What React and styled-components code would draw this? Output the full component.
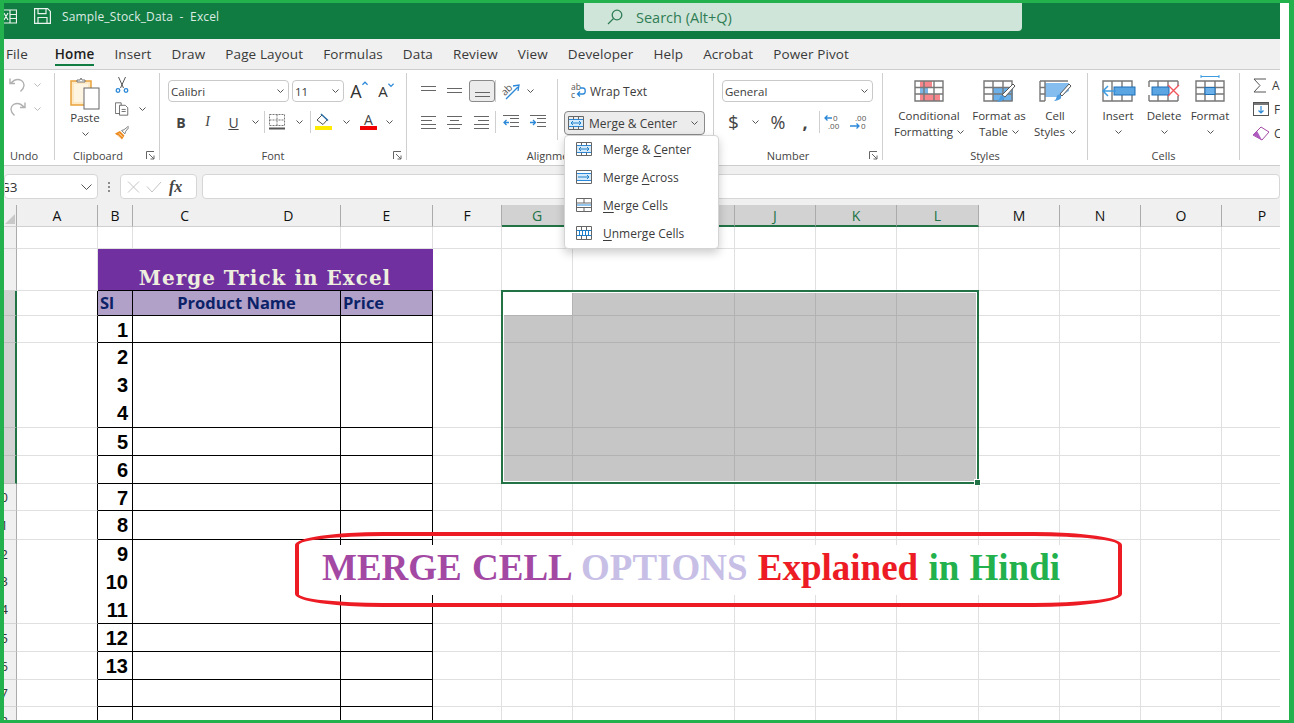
import styled, { createGlobalStyle } from "styled-components"

const GlobalStyle = createGlobalStyle`
    html, body {
        margin: 0;
        padding: 0;
        background: #fff;
    }
    * {
        box-sizing: border-box;
    }
`

const uiFont = `"Open Sans", "Noto Sans", sans-serif`

const Frame = styled.div`
    position: relative;
    width: 1294px;
    height: 723px;
    overflow: hidden;
    background: #fff;
    font-family: ${uiFont};
    color: #333;
    border-style: solid;
    border-color: #22b14c;
    border-width: 3px 5px 3px 4px;
    padding-right: 9px;
    display: flex;
    flex-direction: column;
`

const TitleBar = styled.div`
    height: 36px;
    flex: none;
    background: #107c41;
    display: flex;
    align-items: flex-start;
`

const TitleLeft = styled.div`
    width: 580px;
    height: 100%;
    display: flex;
    align-items: center;
    padding-bottom: 10px;
    color: #dcebe3;
    font-size: 12px;
    letter-spacing: 0.15px;
    white-space: pre;
    svg {
        flex: none;
    }
`

const SaveWrap = styled.span`
    margin: 0 11px 0 17px;
    display: flex;
`

const Search = styled.div`
    width: 438px;
    height: 28px;
    background: #cfe5d9;
    border-radius: 0 0 4px 4px;
    padding-left: 23px;
    display: flex;
    align-items: center;
    gap: 13px;
    color: #2f7d55;
    font-size: 14.5px;
`

const TabBar = styled.div`
    height: 31px;
    flex: none;
    background: #f0f0f0;
    border-bottom: 1px solid #cdcdcd;
    display: flex;
    gap: 20px;
    padding-left: 2px;
`

const Tab = styled.div`
    height: 27px;
    padding-top: 5px;
    font-size: 13.5px;
    letter-spacing: 0.12px;
    line-height: 20px;
    white-space: nowrap;
    margin-right: ${(p) => p.$mr || 0}px;
    color: ${(p) => (p.$active ? "#1d1d1d" : "#3a3a3a")};
    font-weight: ${(p) => (p.$active ? 600 : 400)};
    border-bottom: 2px solid ${(p) => (p.$active ? "#107c41" : "transparent")};
`

const Ribbon = styled.div`
    height: 96px;
    flex: none;
    background: #fff;
    border-bottom: 1px solid #cdcdcd;
    display: flex;
    position: relative;
    z-index: 3;
`

const Group = styled.div`
    width: ${(p) => p.$w}px;
    height: 87px;
    margin-top: 3px;
    flex: none;
    display: flex;
    flex-direction: column;
    border-right: ${(p) => (p.$last ? "none" : "1px solid #cfcfcf")};
    overflow: ${(p) => (p.$last ? "hidden" : "visible")};
`

const GroupBody = styled.div`
    height: 73px;
    flex: none;
    display: flex;
    align-items: flex-start;
    padding-left: ${(p) => p.$pl || 0}px;
    padding-top: ${(p) => p.$pt || 0}px;
`

const LabelRow = styled.div`
    height: 18px;
    flex: none;
    display: flex;
    align-items: center;
`

const GroupLabel = styled.div`
    flex: 1;
    text-align: center;
    font-size: 11px;
    color: #444;
`

const LauncherSlot = styled.div`
    width: ${(p) => p.$w}px;
    display: flex;
    justify-content: flex-end;
    padding-right: 4px;
`

const Stack = styled.div`
    display: flex;
    flex-direction: column;
    gap: ${(p) => p.$gap || 0}px;
    width: ${(p) => (p.$w ? `${p.$w}px` : "auto")};
    padding-top: ${(p) => p.$pt || 0}px;
    flex: none;
`

const Row = styled.div`
    height: ${(p) => p.$h || 22}px;
    display: flex;
    align-items: center;
    padding-left: ${(p) => p.$pl || 0}px;
    gap: ${(p) => p.$gap || 0}px;
`

const Slot = styled.span`
    width: ${(p) => p.$w}px;
    flex: none;
    display: flex;
    align-items: center;
    justify-content: center;
    font-family: ${(p) => p.$font || uiFont};
    font-size: ${(p) => p.$size || 13}px;
    font-weight: ${(p) => p.$weight || 400};
    font-style: ${(p) => p.$italic || "normal"};
    text-decoration: ${(p) => p.$deco || "none"};
    color: ${(p) => p.$color || "#444"};
`

const RowRule = styled.span`
    width: 1px;
    height: 22px;
    flex: none;
    background: #cfcfcf;
`

const Dropdown = styled.div`
    width: ${(p) => p.$w}px;
    height: 22px;
    flex: none;
    background: #fff;
    border: 1px solid #c9c9c9;
    border-radius: 4px;
    display: flex;
    align-items: center;
    justify-content: space-between;
    padding: 0 4px 0 2px;
    font-size: 11.5px;
    color: #3c3c3c;
`

const ActiveAlign = styled.span`
    width: 26px;
    height: 22px;
    flex: none;
    margin-left: 1px;
    background: #ececec;
    border: 1px solid #8a8a8a;
    border-radius: 3px;
    display: flex;
    align-items: center;
    justify-content: center;
`

const ColumnRule = styled.div`
    width: 1px;
    height: 61px;
    margin-top: 6px;
    flex: none;
    background: #cfcfcf;
`

const WrapRow = styled.div`
    height: 22px;
    padding-left: 13px;
    display: flex;
    align-items: center;
    gap: 4px;
    font-size: 12px;
    color: #3c3c3c;
`

const MergeWrap = styled.div`
    position: relative;
    margin: 9px 0 0 6px;
`

const MergeButton = styled.div`
    width: 141px;
    height: 24px;
    background: #ececec;
    border: 1px solid #8a8a8a;
    border-radius: 4px;
    display: flex;
    align-items: center;
    padding: 0 6px 0 3px;
    gap: 5px;
    font-size: 12px;
    color: #3c3c3c;
    span {
        flex: 1;
        white-space: nowrap;
    }
`

const Menu = styled.div`
    position: absolute;
    top: 100%;
    left: 0;
    width: 155px;
    height: 114px;
    background: #fff;
    border: 1px solid #d4d4d4;
    border-radius: 4px;
    box-shadow: 0 4px 10px rgba(0, 0, 0, 0.2);
`

const MenuItem = styled.div`
    height: 28px;
    margin-top: ${(p) => (p.$first ? -1 : 0)}px;
    display: flex;
    align-items: center;
    padding-left: 11px;
    gap: 11px;
    font-size: 12px;
    color: #3c3c3c;
    white-space: nowrap;
    u {
        text-underline-offset: 2px;
    }
`

const BigButton = styled.div`
    width: ${(p) => p.$w}px;
    flex: none;
    display: flex;
    flex-direction: column;
    align-items: center;
    padding-top: ${(p) => p.$pt ?? 7}px;
    font-size: 11.5px;
    line-height: 16px;
    color: #3c3c3c;
    white-space: nowrap;
    svg {
        overflow: visible;
    }
`

const BigIcon = styled.div`
    height: ${(p) => p.$h || 22}px;
    margin-bottom: ${(p) => p.$mb ?? 6}px;
    display: flex;
`

const CaretLine = styled.div`
    height: 16px;
    display: flex;
    align-items: center;
    justify-content: center;
    gap: 4px;
`

const EditRow = styled.div`
    height: 24px;
    display: flex;
    align-items: center;
    gap: 5px;
    font-size: 12px;
    color: #3c3c3c;
`

const FormulaStrip = styled.div`
    height: 39px;
    flex: none;
    background: #f0f0f0;
    padding: 8px 0 6px;
    display: flex;
    align-items: stretch;
`

const FormulaBox = styled.div`
    width: ${(p) => (p.$w ? `${p.$w}px` : "auto")};
    flex: ${(p) => (p.$w ? "none" : 1)};
    margin-left: ${(p) => p.$ml || 0}px;
    background: #fff;
    border: 1px solid #d6d6d6;
    border-radius: 4px;
    display: flex;
    align-items: center;
    overflow: hidden;
    font-size: 13.5px;
    color: #333;
`

const NameText = styled.span`
    flex: 1;
    margin-left: -5px;
`

const Grip = styled.div`
    width: 2px;
    margin-left: 10px;
    align-self: center;
    height: 10px;
    background: repeating-linear-gradient(#8c8c8c 0 2px, transparent 2px 4px);
`

const FxMark = styled.span`
    margin-left: 7px;
    font-family: "Liberation Serif", serif;
    font-style: italic;
    font-size: 16px;
    font-weight: 700;
    color: #444;
`

const Sheet = styled.div`
    position: relative;
    display: grid;
    grid-template-columns: ${(p) => p.$cols};
    grid-template-rows: ${(p) => p.$rows};
    flex: none;
    width: 100%;
    overflow: hidden;
`

const ColHead = styled.div`
    background: ${(p) => (p.$sel ? "#d2d2d2" : "#f0f0f0")};
    color: ${(p) => (p.$sel ? "#217346" : "#111")};
    border-right: 1px solid #ababab;
    border-bottom: ${(p) => (p.$sel ? "2px solid #217346" : "1px solid #d0d0d0")};
    display: flex;
    align-items: center;
    font-size: 14px;
    overflow: hidden;
    span {
        flex: 1;
        text-align: center;
    }
`

const Corner = styled.div`
    background: #f0f0f0;
    border-right: 1px solid #ababab;
    border-bottom: 1px solid #d0d0d0;
    display: flex;
    align-items: flex-end;
    justify-content: flex-end;
    padding: 0 1px 2px 0;
`

const RowHead = styled.div`
    background: ${(p) => (p.$sel ? "#d2d2d2" : "#f0f0f0")};
    border-right: ${(p) => (p.$sel ? "2px solid #217346" : "1px solid #ababab")};
    border-bottom: 1px solid ${(p) => (p.$sel ? "#bdbdbd" : "#d4d4d4")};
    display: flex;
    flex-direction: column;
    justify-content: space-around;
    overflow: hidden;
    font-size: 13px;
    color: #333;
    span {
        display: flex;
        justify-content: flex-end;
        padding-right: 8px;
    }
`

const Cell = styled.div`
    grid-column: ${(p) => p.$span || "auto"};
    background: ${(p) => p.$bg || "#fff"};
    border-right: 1px solid ${(p) => p.$right || "#e0e0e0"};
    border-bottom: 1px solid ${(p) => p.$bottom || "#e0e0e0"};
    display: flex;
    min-width: 0;
`

const TitleText = styled.div`
    width: 100%;
    align-self: flex-end;
    text-align: center;
    font-family: "DejaVu Serif", serif;
    font-weight: 700;
    font-size: 20px;
    letter-spacing: 1px;
    line-height: 24px;
    color: #eeeede;
    white-space: nowrap;
`

const HeadLabel = styled.div`
    width: 100%;
    align-self: center;
    padding: 0 2px;
    text-align: ${(p) => p.$align};
    font-family: "Open Sans", sans-serif;
    font-weight: 700;
    font-size: 16.5px;
    line-height: 22px;
    color: #0c2268;
`

const Numbers = styled.div`
    width: 100%;
    display: flex;
    flex-direction: column;
    justify-content: space-around;
    text-align: right;
    padding-right: 4px;
    font-family: "Liberation Sans", sans-serif;
    font-weight: 700;
    font-size: 20px;
    line-height: 28px;
    color: #000;
`

const SelectionBox = styled.div`
    position: absolute;
    inset: -1px 0 0 -1px;
    grid-column: 7 / 12;
    grid-row: 4 / 9;
    border: 2px solid #217346;
    box-shadow: inset 0 0 0 1px #fff;
    pointer-events: none;
    &::after {
        content: "";
        position: absolute;
        right: -4px;
        bottom: -4px;
        width: 5px;
        height: 5px;
        background: #217346;
        border: 1px solid #fff;
    }
`

const Callout = styled.div`
    position: absolute;
    left: 291px;
    top: 529px;
    width: 827px;
    height: 75px;
    border: 4px solid #ed1c24;
    border-radius: 88px / 13px;
    display: flex;
    align-items: center;
`

const CalloutBand = styled.div`
    width: 100%;
    height: 50px;
    background: #fff;
    padding-left: 23px;
    font-family: "Liberation Serif", serif;
    font-weight: 700;
    font-size: 37px;
    word-spacing: 1px;
    line-height: 46px;
    white-space: pre;
`

const Tone = styled.span`
    color: ${(p) => p.$c};
`

/* icons */

const Chev = ({ c = "#555" }) => (
    <svg width="7" height="4" viewBox="0 0 7 4">
        <path d="M.5.5l3 3 3-3" fill="none" stroke={c} />
    </svg>
)

const Launcher = () => (
    <svg width="9" height="9" viewBox="0 0 9 9" fill="none" stroke="#666">
        <path d="M.5 8V.5H8M3 3l5 5M8 4.5V8H4.5" />
    </svg>
)

const Lines = ({ kind }) => {
    const rows = {
        top: [[0, 15, 3], [0, 15, 7]],
        middle: [[0, 15, 5], [0, 15, 9]],
        bottom: [[0, 15, 9], [0, 15, 13]],
        left: [[0, 15, 2], [0, 11, 6], [0, 15, 10], [0, 15, 14]],
        center: [[0, 15, 2], [3, 12, 6], [0, 15, 10], [2, 13, 14]],
        right: [[0, 15, 2], [4, 15, 6], [0, 15, 10], [0, 15, 14]],
    }[kind]
    return (
        <svg width="15" height="16" viewBox="0 0 15 16" stroke="#666">
            {rows.map(([a, b, y]) => (
                <path key={y} d={`M${a} ${y + 0.5}H${b}`} />
            ))}
        </svg>
    )
}

const Indent = ({ flip }) => (
    <svg width="16" height="14" viewBox="0 0 16 14" fill="none">
        <path d="M7 3.5h9M7 7.5h9M7 11.5h9M0 .5h16" stroke="#666" />
        <path d={flip ? "M0 7.5h5M3 5l2.500 2.500L3 10" : "M6 7.5H1M3.500 5L1 7.500 3.500 10"} stroke="#2b88d8" strokeWidth="1.3" />
    </svg>
)

const ExcelGlyph = () => (
    <svg width="13" height="15" viewBox="0 0 13 15" fill="none" stroke="#eaf3ee" strokeWidth="1.2">
        <path d="M0 1h12.500v13H0M6 1v13M6 5.500h6.500M6 9.500h6.500M0 4l4 7M4 4l-4 7" />
    </svg>
)

const SaveGlyph = () => (
    <svg width="17" height="16" viewBox="0 0 17 16" fill="none" stroke="#eaf3ee" strokeWidth="1.2">
        <path d="M.6.6h13l2.800 2.800v12H.6zM4 .6v5h8v-5M4 15.400V9.500h9v5.900" />
    </svg>
)

const SearchGlyph = () => (
    <svg width="16" height="16" viewBox="0 0 16 16" fill="none" stroke="#2f7d55" strokeWidth="1.3">
        <circle cx="10" cy="6" r="4.800" />
        <path d="M6.500 9.500L1 15" />
    </svg>
)

const UndoGlyph = ({ flip }) => (
    <svg width="17" height="16" viewBox="0 0 17 16" fill="none" stroke="#b0b0b0" strokeWidth="1.4" style={flip ? { transform: "scaleX(-1)" } : undefined}>
        <path d="M1 1.500v5h5M1.500 6.500C5 2.500 9 1.500 12.500 3.500c3.500 2.500 3.500 7-1 11" />
    </svg>
)

const PasteGlyph = () => (
    <svg width="30" height="32" viewBox="0 0 30 32">
        <rect x="1" y="4" width="20" height="24" fill="#fde9c4" stroke="#e9a23b" strokeWidth="1.5" />
        <path d="M4 7h14v18H4z" fill="#fff" opacity=".5" />
        <path d="M7 5V3h3l1-2 1 2h3v2z" fill="#fff" stroke="#777" />
        <rect x="14" y="11" width="15" height="21" fill="#fff" stroke="#666" />
    </svg>
)

const ScissorsGlyph = () => (
    <svg width="14" height="16" viewBox="0 0 14 16" fill="none">
        <path d="M3.500 0l5 11M10.500 0l-5 11" stroke="#555" />
        <circle cx="3" cy="13.500" r="1.800" stroke="#2b88d8" strokeWidth="1.300" />
        <circle cx="11" cy="13.500" r="1.800" stroke="#2b88d8" strokeWidth="1.300" />
    </svg>
)

const CopyGlyph = () => (
    <svg width="17" height="16" viewBox="0 0 17 16" fill="#fff" stroke="#555">
        <path d="M.5.5h7l0 13h-7z" />
        <path d="M5.500 3.500h7l3 3v9h-10zM8 8.500h5M8 11h5" />
    </svg>
)

const BrushGlyph = () => (
    <svg width="17" height="16" viewBox="0 0 17 16" fill="none">
        <path d="M0 8.500l6-3 5.500 5.500-3 5z" fill="#ed8b21" />
        <path d="M3 10.500l4 4M5 8.500l4 4" stroke="#fff" />
        <path d="M8 5l3-1 5-4 1 1-4 5-1 3z" fill="#fff" stroke="#666" />
    </svg>
)

const GrowA = ({ down }) => (
    <>
        <span>A</span>
        <svg width="6" height="5" viewBox="0 0 7 5" style={{ alignSelf: "flex-start", marginTop: 2 }}>
            <path d={down ? "M.5.5l3 3 3-3" : "M.5 4l3-3 3 3"} fill="none" stroke="#2b88d8" strokeWidth="1.400" />
        </svg>
    </>
)

const BorderGlyph = () => (
    <svg width="16" height="16" viewBox="0 0 16 16" fill="none" stroke="#777">
        <path d="M.5.500h15v11H.500zM8 .500v11M.500 6h15" strokeDasharray="2 1" />
        <path d="M0 14.500h16" strokeWidth="2" stroke="#555" />
    </svg>
)

const FillGlyph = () => (
    <svg width="17" height="18" viewBox="0 0 17 18">
        <path d="M2 7l5-5 5 5-4 4.500z" fill="#fff" stroke="#555" />
        <path d="M6 1l7 6.500" stroke="#2b6ea8" strokeWidth="1.500" />
        <rect y="13" width="17" height="4" fill="#ffeb00" />
    </svg>
)

const ColorA = () => (
    <svg width="17" height="18" viewBox="0 0 17 18">
        <text x="8.500" y="12" textAnchor="middle" fontFamily="Open Sans" fontSize="14" fill="#444">A</text>
        <rect y="13" width="17" height="4" fill="#f00000" />
    </svg>
)

const OrientGlyph = () => (
    <svg width="20" height="18" viewBox="0 0 20 18">
        <text x="0" y="11" fontFamily="Open Sans" fontSize="10" fill="#555" transform="rotate(-45 6 8)">ab</text>
        <path d="M5 17L17 5M12 4l6-1-1 6" fill="none" stroke="#2b88d8" strokeWidth="1.300" />
    </svg>
)

const WrapGlyph = () => (
    <svg width="15" height="16" viewBox="0 0 15 16">
        <text x="0" y="7" fontFamily="Open Sans" fontSize="8.500" fill="#555">ab</text>
        <text x="0" y="15" fontFamily="Open Sans" fontSize="8.500" fill="#555">c</text>
        <path d="M9 5h3c3 0 3 6 0 6H6.500M9 8.500L6.500 11 9 13.500" fill="none" stroke="#2b88d8" strokeWidth="1.300" />
    </svg>
)

const DecimalGlyph = ({ more }) => (
    <svg width="18" height="18" viewBox="0 0 18 18">
        <text x={more ? 5 : 9} y="7.500" fontFamily="Open Sans" fontSize="8" fill="#555">{more ? ".00" : "0"}</text>
        <text x={more ? 11 : 4} y="16" fontFamily="Open Sans" fontSize="8" fill="#555">{more ? "0" : ".00"}</text>
        <path d={more ? "M0 13h9M6.500 10.500L9 13l-2.500 2.500" : "M8 5H1M3.500 2.500L1 5l2.500 2.500"} fill="none" stroke="#2b88d8" strokeWidth="1.300" />
    </svg>
)

const MergeGlyph = ({ kind }) => (
    <svg width="16" height="16" viewBox="0 0 16 16" fill="none">
        {(kind === "center" || kind === "across") && <rect x=".5" y="4.500" width="15" height="7" fill="#d5eafa" stroke="#2b88d8" />}
        <path d="M.5 1.500h15v13H.500z" stroke="#666" />
        {kind === "center" && <path d="M5.500 1.500v3M10.500 1.500v3M5.500 11.500v3M10.500 11.500v3" stroke="#666" />}
        {kind === "cells" && <path d="M.5 6h15M.5 10.500h15M8 1.500v4.500M8 10.500v4" stroke="#666" />}
        {kind === "cells" && <path d="M1 8h14" stroke="#2b88d8" />}
        {kind === "unmerge" && <path d="M.5 5.500h15M.5 10.500h15M3.500 5.500v5M6.500 5.500v5M9.500 5.500v5M12.500 5.500v5" stroke="#1f7fc9" />}
        {kind === "unmerge" && <path d="M5.500 1.500v4M10.500 1.500v4M5.500 10.500v4M10.500 10.500v4" stroke="#666" />}
        {kind === "center" && <path d="M3 8h10M5 6L3 8l2 2M11 6l2 2-2 2" stroke="#1f7fc9" />}
        {kind === "across" && <path d="M2 8h11M11 6l2 2-2 2" stroke="#1f7fc9" />}
    </svg>
)

const Table30 = ({ children }) => (
    <svg width="30" height="22" viewBox="0 0 30 22" fill="none">
        {children}
        <path d="M1 1h28v20H1zM1 7.500h28M1 14h28M10 1v20M20 1v20" stroke="#777" strokeWidth="1.400" />
    </svg>
)

const ConditionalGlyph = () => (
    <Table30>
        <rect x="6" y="1" width="12" height="7" fill="#f6858c" />
        <rect x="6" y="8" width="8" height="7" fill="#7db7e8" />
        <rect x="6" y="14" width="20" height="7" fill="#f6858c" />
    </Table30>
)

const TableStyleGlyph = () => (
    <svg width="32" height="26" viewBox="0 0 32 26" fill="none">
        <rect x="10" y="7" width="20" height="14" fill="#6db1ea" />
        <path d="M1 1h28v20H1zM1 7.500h28M1 14h28M10 1v20M20 1v20" stroke="#777" strokeWidth="1.400" />
        <path d="M19 15L30 4l2 2-10 11z" fill="#fff" stroke="#555" />
        <path d="M17 17c2-3 5-1 4 2-1 2-5 3-7 3 2-1 2-3 3-5z" fill="#4d9ce0" />
    </svg>
)

const CellStyleGlyph = () => (
    <svg width="32" height="26" viewBox="0 0 32 26" fill="none">
        <path d="M6 3h24v8L20 17H6z" fill="#84bdee" />
        <path d="M1 1h28M1 7.500h5M1 14h5M1 1v20h5M6 1v20" stroke="#777" strokeWidth="1.400" />
        <path d="M21 14L30 4l2 2-9 10z" fill="#fff" stroke="#555" />
        <path d="M18 16c2-3 5-1 4 2-1 2-5 3-7 3 2-1 2-3 3-5z" fill="#4d9ce0" />
    </svg>
)

const InsertGlyph = () => (
    <svg width="33" height="22" viewBox="0 0 33 22" fill="none">
        <path d="M1 1h29v20H1zM10 1v20M20 1v20" stroke="#777" strokeWidth="1.400" />
        <rect x="12" y="7" width="21" height="8" fill="#5aa5e2" stroke="#1f6fb5" />
        <path d="M14 11H1M6 6l-5 5 5 5" stroke="#3d9be0" strokeWidth="1.500" />
    </svg>
)

const DeleteGlyph = () => (
    <svg width="32" height="22" viewBox="0 0 32 22" fill="none">
        <path d="M1 1h29M1 21h29M1 1v6M1 15v6M10 1v6M10 15v6M20 1v6M20 15v6M30 1v5M30 16v5" stroke="#777" strokeWidth="1.400" />
        <rect x="4" y="7" width="17" height="8" fill="#5aa5e2" stroke="#1f6fb5" />
        <path d="M20 5l11 11M31 5L20 16" stroke="#f0565c" strokeWidth="1.400" />
    </svg>
)

const FormatGlyph = () => (
    <svg width="30" height="22" viewBox="0 0 30 22" fill="none">
        <path d="M6-3.500h18M6-5v3M24-5v3" stroke="#3d9be0" />
        <path d="M1 1h28v20H1zM1 7.500h28M1 14h28M10 1v20M20 1v20" stroke="#777" strokeWidth="1.400" />
        <rect x="10" y="7.500" width="10" height="7" fill="#6db1ea" stroke="#1f6fb5" />
    </svg>
)

const SumGlyph = () => (
    <svg width="14" height="15" viewBox="0 0 14 15" fill="none" stroke="#555">
        <path d="M13 1H1l6 6.500L1 14h12" />
    </svg>
)

const FillDownGlyph = () => (
    <svg width="16" height="14" viewBox="0 0 16 14" fill="none">
        <rect x=".5" y=".5" width="15" height="13" stroke="#555" />
        <rect x="1" y="1" width="14" height="2" fill="#777" />
        <path d="M8 4v7M5.500 8.500L8 11l2.500-2.500" stroke="#2b88d8" strokeWidth="1.200" />
    </svg>
)

const EraserGlyph = () => (
    <svg width="16" height="15" viewBox="0 0 16 15">
        <path d="M0 9l8-8 8 5-7 8z" fill="#fff" stroke="#a349a4" />
        <path d="M0 9l4-4 5 9z" fill="#b05cc0" />
    </svg>
)

const CornerMark = () => (
    <svg width="10" height="10" viewBox="0 0 10 10">
        <path d="M10 0v10H0z" fill="#c8c8c8" />
    </svg>
)

/* data */

const tabs = ["File", "Home", "Insert", "Draw", "Page Layout", "Formulas", "Data", "Review", "View", "Developer", "Help", "Acrobat", "Power Pivot"]

const colWidths = [13, 81, 35, 208, 92, 69, 71, 162, 81, 81, 82, 81, 81, 81, 81]
const colHeads = [null, ["A"], ["B"], ["C", "D"], ["E"], ["F"], ["G"], ["H", "I"], ["J"], ["K"], ["L"], ["M"], ["N"], ["O"], ["P"]]
const sheetRows = [
    { h: 22 },
    { h: 42 },
    { h: 25, head: true },
    { h: 27, nums: ["1"] },
    { h: 85, nums: ["2", "3", "4"] },
    { h: 28, nums: ["5"] },
    { h: 28, nums: ["6"] },
    { h: 27, nums: ["7"], labels: ["10"] },
    { h: 29, nums: ["8"], labels: ["11"] },
    { h: 84, nums: ["9", "10", "11"], labels: ["12", "13", "14"] },
    { h: 28, nums: ["12"], labels: ["15"] },
    { h: 28, nums: ["13"], labels: ["16"] },
    { h: 27, nums: [], labels: ["17"] },
    { h: 28, nums: [], labels: ["18"] },
]
const headLabels = { 2: ["Sl", "left"], 3: ["Product Name", "center"], 4: ["Price", "left"] }

const menuItems = [
    { kind: "center", text: <>Merge &amp; <u>C</u>enter</> },
    { kind: "across", text: <>Merge <u>A</u>cross</> },
    { kind: "cells", text: <><u>M</u>erge Cells</> },
    { kind: "unmerge", text: <><u>U</u>nmerge Cells</> },
]

const isSelRow = (i) => i >= 2 && i <= 6
const isSelCol = (c) => c >= 6 && c <= 10

const SheetRow = ({ row, index }) => {
    const sel = isSelRow(index)
    const inTable = index >= 2
    const cells = []
    colWidths.slice(1).forEach((_, k) => {
        const c = k + 1
        if (index === 1 && (c === 3 || c === 4)) return
        if (index === 1 && c === 2) {
            cells.push(
                <Cell key={c} $span="3 / 6" $bg="#7030a0" $right="#7030a0" $bottom="#000">
                    <TitleText>Merge Trick in Excel</TitleText>
                </Cell>
            )
            return
        }
        const table = inTable && c >= 2 && c <= 4
        let bg = "#fff"
        let line = "#e0e0e0"
        if (sel && isSelCol(c)) {
            bg = index === 2 && c === 6 ? "#fff" : "#c6c6c6"
            line = "#b2b2b2"
        }
        if (table) line = "#000"
        if (row.head && table) bg = "#b1a0c7"
        cells.push(
            <Cell
                key={c}
                $bg={bg}
                $right={table || (inTable && c === 1) ? "#000" : line}
                $bottom={line}
            >
                {row.head && headLabels[c] && <HeadLabel $align={headLabels[c][1]}>{headLabels[c][0]}</HeadLabel>}
                {c === 2 && row.nums && row.nums.length > 0 && (
                    <Numbers>
                        {row.nums.map((n) => (
                            <div key={n}>{n}</div>
                        ))}
                    </Numbers>
                )}
            </Cell>
        )
    })
    return (
        <>
            <RowHead $sel={sel}>
                {(row.labels || []).map((l) => (
                    <span key={l}>{l}</span>
                ))}
            </RowHead>
            {cells}
        </>
    )
}

const App = () => {
    return (
        <Frame>
            <GlobalStyle />
            <TitleBar>
                <TitleLeft>
                    <ExcelGlyph />
                    <SaveWrap>
                        <SaveGlyph />
                    </SaveWrap>
                    Sample_Stock_Data  -  Excel
                </TitleLeft>
                <Search>
                    <SearchGlyph />
                    Search (Alt+Q)
                </Search>
            </TitleBar>

            <TabBar>
                {tabs.map((t) => (
                    <Tab key={t} $active={t === "Home"} $mr={t === "File" ? 7 : 0}>
                        {t}
                    </Tab>
                ))}
            </TabBar>

            <Ribbon>
                <Group $w={51}>
                    <GroupBody $pl={4}>
                        <Stack>
                            <Row $h={24}>
                                <Slot $w={18}><UndoGlyph /></Slot>
                                <Slot $w={22}><Chev c="#bbb" /></Slot>
                            </Row>
                            <Row $h={24}>
                                <Slot $w={18}><UndoGlyph flip /></Slot>
                                <Slot $w={22}><Chev c="#bbb" /></Slot>
                            </Row>
                        </Stack>
                    </GroupBody>
                    <LabelRow>
                        <GroupLabel>Undo</GroupLabel>
                        <LauncherSlot $w={10} />
                    </LabelRow>
                </Group>

                <Group $w={105}>
                    <GroupBody>
                        <BigButton $w={60} $pt={4}>
                            <BigIcon $h={32} $mb={1}><PasteGlyph /></BigIcon>
                            Paste
                            <CaretLine><Chev /></CaretLine>
                        </BigButton>
                        <Stack>
                            <Row $h={24}><Slot $w={14}><ScissorsGlyph /></Slot></Row>
                            <Row $h={24}>
                                <Slot $w={14}><CopyGlyph /></Slot>
                                <Slot $w={26}><Chev /></Slot>
                            </Row>
                            <Row $h={24}><Slot $w={14}><BrushGlyph /></Slot></Row>
                        </Stack>
                    </GroupBody>
                    <LabelRow>
                        <GroupLabel>Clipboard</GroupLabel>
                        <LauncherSlot $w={18}><Launcher /></LauncherSlot>
                    </LabelRow>
                </Group>

                <Group $w={247}>
                    <GroupBody $pl={8} $pt={7}>
                        <Stack $gap={9}>
                            <Row $gap={3}>
                                <Dropdown $w={121}>Calibri<Chev /></Dropdown>
                                <Dropdown $w={52}>11<Chev /></Dropdown>
                                <Slot $w={24} $size={18} $color="#333"><GrowA /></Slot>
                                <Slot $w={24} $size={15} $color="#333"><GrowA down /></Slot>
                            </Row>
                            <Row>
                                <Slot $w={26} $size={14} $weight={700}>B</Slot>
                                <Slot $w={27} $size={14} $italic="italic" $font={`"Liberation Serif", serif`}>I</Slot>
                                <Slot $w={25} $size={14} $deco="underline">U</Slot>
                                <Slot $w={18}><Chev /></Slot>
                                <RowRule />
                                <Slot $w={23}><BorderGlyph /></Slot>
                                <Slot $w={22}><Chev /></Slot>
                                <RowRule />
                                <Slot $w={24}><FillGlyph /></Slot>
                                <Slot $w={22}><Chev /></Slot>
                                <Slot $w={22}><ColorA /></Slot>
                                <Slot $w={20}><Chev /></Slot>
                            </Row>
                        </Stack>
                    </GroupBody>
                    <LabelRow>
                        <GroupLabel>Font</GroupLabel>
                        <LauncherSlot $w={20}><Launcher /></LauncherSlot>
                    </LabelRow>
                </Group>

                <Group $w={307}>
                    <GroupBody>
                        <Stack $gap={9} $pt={7} $w={150}>
                            <Row $pl={9}>
                                <Slot $w={24}><Lines kind="top" /></Slot>
                                <Slot $w={28}><Lines kind="middle" /></Slot>
                                <ActiveAlign><Lines kind="bottom" /></ActiveAlign>
                                <RowRule />
                                <Slot $w={30}><OrientGlyph /></Slot>
                                <Slot $w={8}><Chev /></Slot>
                            </Row>
                            <Row $pl={9}>
                                <Slot $w={24}><Lines kind="left" /></Slot>
                                <Slot $w={28}><Lines kind="center" /></Slot>
                                <Slot $w={27}><Lines kind="right" /></Slot>
                                <RowRule />
                                <Slot $w={30}><Indent /></Slot>
                                <Slot $w={24}><Indent flip /></Slot>
                            </Row>
                        </Stack>
                        <ColumnRule />
                        <Stack $pt={7}>
                            <WrapRow>
                                <WrapGlyph />
                                Wrap Text
                            </WrapRow>
                            <MergeWrap>
                                <MergeButton>
                                    <MergeGlyph kind="center" />
                                    <span>Merge &amp; Center</span>
                                    <Chev />
                                </MergeButton>
                                <Menu>
                                    {menuItems.map((m, i) => (
                                        <MenuItem key={m.kind} $first={i === 0}>
                                            <MergeGlyph kind={m.kind} />
                                            <span>{m.text}</span>
                                        </MenuItem>
                                    ))}
                                </Menu>
                            </MergeWrap>
                        </Stack>
                    </GroupBody>
                    <LabelRow>
                        <GroupLabel>Alignment</GroupLabel>
                        <LauncherSlot $w={14} />
                    </LabelRow>
                </Group>

                <Group $w={169}>
                    <GroupBody $pl={8} $pt={7}>
                        <Stack $gap={9}>
                            <Row><Dropdown $w={151}>General<Chev /></Dropdown></Row>
                            <Row>
                                <Slot $w={23} $size={19}>$</Slot>
                                <Slot $w={20}><Chev /></Slot>
                                <Slot $w={26} $size={18}>%</Slot>
                                <Slot $w={28} $size={18} $weight={700}>,</Slot>
                                <RowRule />
                                <Slot $w={26}><DecimalGlyph /></Slot>
                                <Slot $w={26}><DecimalGlyph more /></Slot>
                            </Row>
                        </Stack>
                    </GroupBody>
                    <LabelRow>
                        <GroupLabel>Number</GroupLabel>
                        <LauncherSlot $w={20}><Launcher /></LauncherSlot>
                    </LabelRow>
                </Group>

                <Group $w={205}>
                    <GroupBody $pl={12}>
                        <BigButton $w={68}>
                            <BigIcon><ConditionalGlyph /></BigIcon>
                            Conditional
                            <CaretLine>Formatting <Chev /></CaretLine>
                        </BigButton>
                        <BigButton $w={72}>
                            <BigIcon><TableStyleGlyph /></BigIcon>
                            Format as
                            <CaretLine>Table <Chev /></CaretLine>
                        </BigButton>
                        <BigButton $w={40}>
                            <BigIcon><CellStyleGlyph /></BigIcon>
                            Cell
                            <CaretLine>Styles <Chev /></CaretLine>
                        </BigButton>
                    </GroupBody>
                    <LabelRow>
                        <GroupLabel>Styles</GroupLabel>
                    </LabelRow>
                </Group>

                <Group $w={152}>
                    <GroupBody $pl={7}>
                        <BigButton $w={46}>
                            <BigIcon><InsertGlyph /></BigIcon>
                            Insert
                            <CaretLine><Chev /></CaretLine>
                        </BigButton>
                        <BigButton $w={46}>
                            <BigIcon><DeleteGlyph /></BigIcon>
                            Delete
                            <CaretLine><Chev /></CaretLine>
                        </BigButton>
                        <BigButton $w={46}>
                            <BigIcon><FormatGlyph /></BigIcon>
                            Format
                            <CaretLine><Chev /></CaretLine>
                        </BigButton>
                    </GroupBody>
                    <LabelRow>
                        <GroupLabel>Cells</GroupLabel>
                    </LabelRow>
                </Group>

                <Group $w={40} $last>
                    <GroupBody $pl={13}>
                        <Stack>
                            <EditRow><SumGlyph />A</EditRow>
                            <EditRow><FillDownGlyph />F</EditRow>
                            <EditRow><EraserGlyph />C</EditRow>
                        </Stack>
                    </GroupBody>
                </Group>
            </Ribbon>

            <FormulaStrip>
                <FormulaBox $w={94}>
                    <NameText>G3</NameText>
                    <Slot $w={22}>
                        <svg width="11" height="6" viewBox="0 0 11 6">
                            <path d="M.5.5l5 5 5-5" fill="none" stroke="#555" />
                        </svg>
                    </Slot>
                </FormulaBox>
                <Grip />
                <FormulaBox $w={77} $ml={10}>
                    <Slot $w={25}>
                        <svg width="13" height="12" viewBox="0 0 13 12" stroke="#c4c4c4" fill="none">
                            <path d="M1 .5l11 11M12 .5l-11 11" />
                        </svg>
                    </Slot>
                    <svg width="16" height="12" viewBox="0 0 16 12" stroke="#c4c4c4" fill="none">
                        <path d="M1 5.500l5 5.500L15 1" />
                    </svg>
                    <FxMark>fx</FxMark>
                </FormulaBox>
                <FormulaBox $ml={5} />
            </FormulaStrip>

            <Sheet
                $cols={colWidths.map((w) => `${w}px`).join(" ")}
                $rows={"22px " + sheetRows.map((r) => `${r.h}px`).join(" ")}
            >
                {colHeads.map((labels, c) =>
                    labels ? (
                        <ColHead key={c} $sel={isSelCol(c)}>
                            {labels.map((l) => (
                                <span key={l}>{l}</span>
                            ))}
                        </ColHead>
                    ) : (
                        <Corner key="corner"><CornerMark /></Corner>
                    )
                )}
                {sheetRows.map((row, i) => (
                    <SheetRow key={i} row={row} index={i} />
                ))}
                <SelectionBox />
            </Sheet>

            <Callout>
                <CalloutBand>
                    <Tone $c="#a349a4">MERGE CELL </Tone>
                    <Tone $c="#c8bfe7">OPTIONS </Tone>
                    <Tone $c="#ed1c24">Explained </Tone>
                    <Tone $c="#22b14c">in Hindi</Tone>
                </CalloutBand>
            </Callout>
        </Frame>
    )
}

export default App
